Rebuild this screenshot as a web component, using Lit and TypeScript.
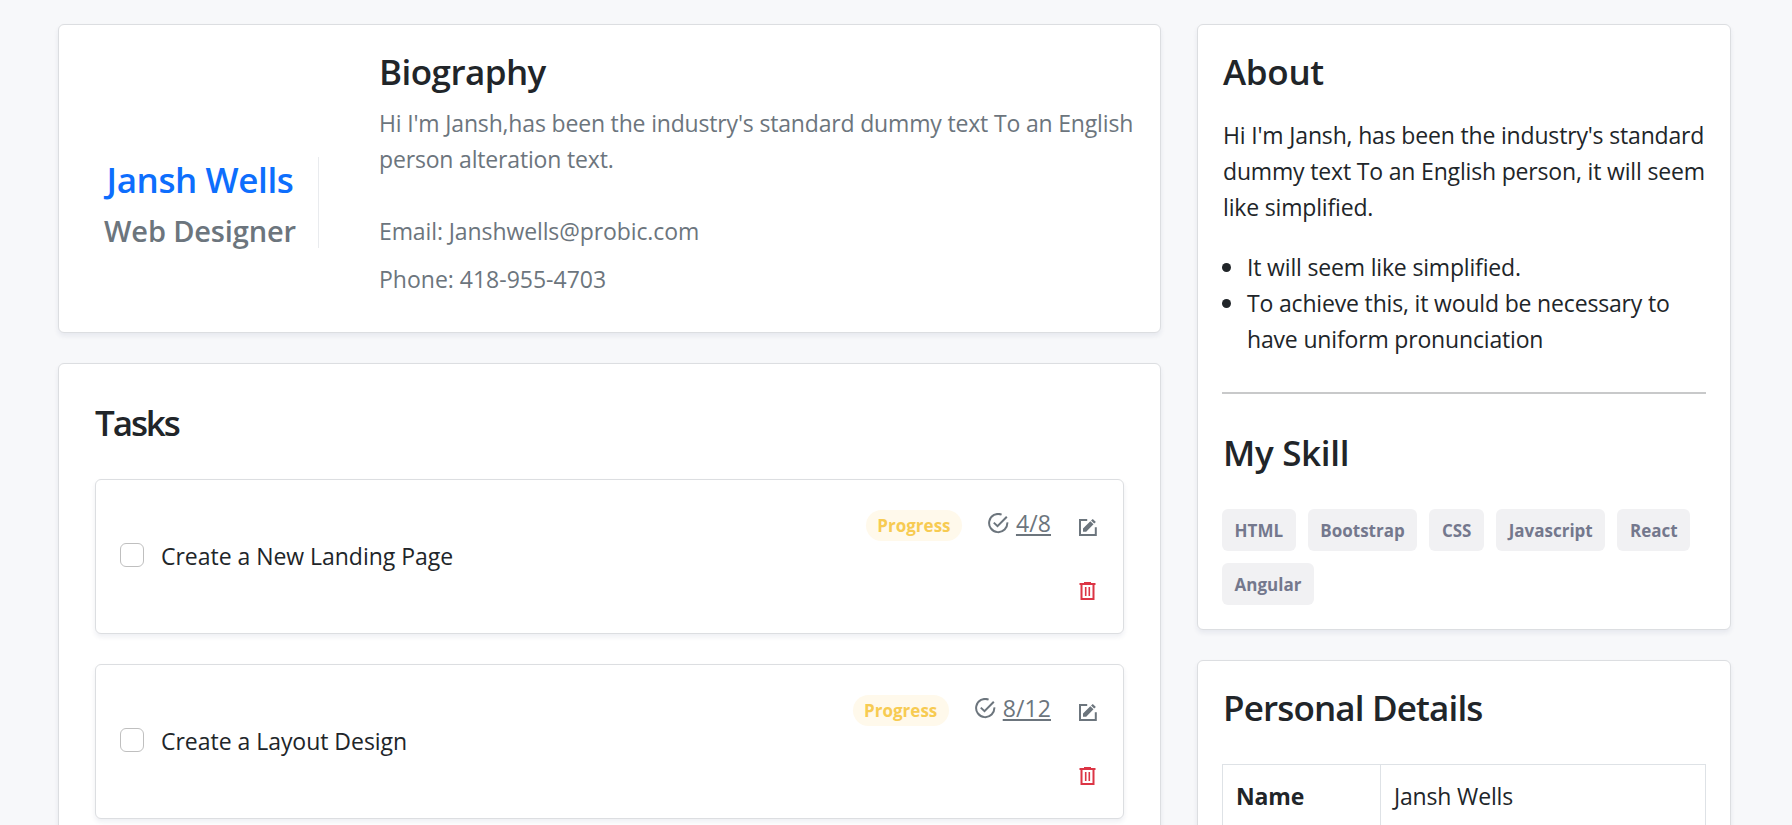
import { LitElement, html, css, svg } from "lit";
import { customElement, property } from "lit/decorators.js";

const checkIcon = html`<svg class="check" width="21" height="21" viewBox="0 0 21 21" fill="none" stroke="currentColor" stroke-width="2">
  ${svg`<path d="M13.6 1.6A9.1 9.1 0 1 0 19.3 9.4"/><path d="M5.8 9.6L9.5 13.2L18.8 3.7"/>`}
</svg>`;

const editIcon = html`<svg width="19" height="19" viewBox="0 0 19 19">
  ${svg`<path d="M9.2 2H2V17H17.8V9.2" fill="none" stroke="currentColor" stroke-width="2"/>
  <path d="M5 13.7V10.4L12.3 3.2L15.5 6.3L8.2 13.7ZM13 2.5L14.8 1L17.9 3.9L16.2 5.6Z" fill="currentColor"/>`}
</svg>`;

const trashIcon = html`<svg width="17" height="18" viewBox="0 0 17 18">
  ${svg`<path d="M5 0H12V1H16.5V3H0.5V1H5Z" fill="currentColor"/>
  <path d="M2.5 2V17H14.5V2" fill="none" stroke="currentColor" stroke-width="2"/>
  <path d="M6.7 5V14M10.3 5V14" stroke="currentColor" stroke-width="1.6"/>`}
</svg>`;

@customElement("task-item")
export class TaskItem extends LitElement {
  @property() label = "";
  @property() count = "";

  static styles = css`
    :host { display: block; }
    .task {
      box-sizing: border-box;
      height: 155px;
      display: flex;
      padding: 0 26px 0 24px;
      background: #fff;
      border: 1px solid #dcdee1;
      border-radius: 6px;
      box-shadow: 0 3px 5px rgba(30, 40, 90, 0.075);
    }
    .main { flex: 1; display: flex; align-items: flex-start; padding-top: 58px; }
    .box {
      box-sizing: border-box;
      width: 24px;
      height: 24px;
      margin: 5px 0 0;
      appearance: none;
      background: #fff;
      border: 1px solid #bfbfbf;
      border-radius: 6px;
    }
    .label { margin-left: 17px; letter-spacing: -0.03px; }
    .side { display: flex; flex-direction: column; align-items: flex-end; }
    .status { display: flex; color: #6c757d; margin-top: 25px; }
    .badge {
      box-sizing: border-box;
      width: 96px;
      height: 31px;
      margin-top: 5px;
      border-radius: 16px;
      background: #fff9eb;
      color: #f7cb52;
      font-size: 17px;
      font-weight: 700;
      line-height: 32px;
      letter-spacing: 0;
      text-align: center;
    }
    .check { margin: 8px 7px 0 26px; }
    .count { letter-spacing: 0.1px; text-decoration: underline; text-decoration-thickness: 2px; text-underline-offset: 2px; }
    .edit { width: 19px; margin: 13px 0 0 27px; line-height: 0; }
    .trash { color: #dc3545; margin: 41px 1px 0 0; line-height: 0; }
  `;

  render() {
    return html`
      <div class="task">
        <div class="main">
          <input class="box" type="checkbox" />
          <span class="label">${this.label}</span>
        </div>
        <div class="side">
          <div class="status">
            <span class="badge">Progress</span>
            ${checkIcon}
            <span class="count">${this.count}</span>
            <span class="edit">${editIcon}</span>
          </div>
          <div class="trash">${trashIcon}</div>
        </div>
      </div>
    `;
  }
}

@customElement("app-root")
export class AppRoot extends LitElement {
  private tasks = [
    { label: "Create a New Landing Page", count: "4/8" },
    { label: "Create a Layout Design", count: "8/12" },
  ];

  private skills = ["HTML", "Bootstrap", "CSS", "Javascript", "React", "Angular"];

  static styles = css`
    :host {
      display: block;
      height: 825px;
      overflow: hidden;
      background: #f7f8fa;
      color: #212529;
      font: 400 23px/36px "Open Sans", "Noto Sans", sans-serif;
      letter-spacing: -0.17px;
    }
    h2, h3, p, ul { margin: 0; }
    .page {
      display: grid;
      grid-template-columns: 1103px 534px;
      column-gap: 36px;
      align-items: start;
      padding: 24px 0 0 58px;
    }
    .col { display: flex; flex-direction: column; gap: 30px; }
    .card {
      box-sizing: border-box;
      background: #fff;
      border: 1px solid #dcdee1;
      border-radius: 6px;
      box-shadow: 0 3px 5px rgba(30, 40, 90, 0.075);
    }
    .title { font-size: 35px; font-weight: 600; line-height: 43px; letter-spacing: -0.55px; }
    .profile { height: 309px; display: flex; padding: 25px 0 0 23px; }
    .identity {
      box-sizing: border-box;
      width: 237px;
      height: 91px;
      margin-top: 107px;
      border-right: 1px solid #e9ebee;
      text-align: center;
    }
    .name { color: #0d6efd; line-height: 45px; letter-spacing: -0.4px; }
    .role { margin-top: 11px; color: #6c757d; font-size: 29px; font-weight: 600; line-height: 36px; letter-spacing: -0.15px; }
    .bio { margin-left: 60px; width: 765px; color: #6c757d; }
    .bio .title { color: #212529; margin-bottom: 12px; }
    .mail { margin-top: 36px; letter-spacing: -0.1px; }
    .phone { margin-top: 12px; letter-spacing: 0; }
    .tasks { height: 520px; padding: 37px 36px 0; }
    .tasks .title { letter-spacing: -2.1px; margin-bottom: 35px; }
    .list { display: flex; flex-direction: column; gap: 30px; }
    .about { height: 606px; padding: 25px 24px 0; }
    .about .title { padding-left: 1px; letter-spacing: -0.3px; }
    .intro { margin: 24px 0 0 1px; white-space: nowrap; }
    .points { margin-top: 24px; padding: 0; list-style: none; }
    .point { display: flex; gap: 16px; }
    .dot { flex: none; width: 9px; height: 9px; margin-top: 14px; border-radius: 50%; background: #212529; }
    .rule { height: 2px; margin: 35px 0 37px; background: #c8c9ca; }
    .tags { display: flex; flex-wrap: wrap; gap: 12px; margin-top: 35px; }
    .tag {
      height: 42px;
      padding: 0 12.6px;
      border-radius: 6px;
      background: #f1f1f3;
      color: #74788d;
      font-size: 17px;
      font-weight: 700;
      line-height: 43px;
      letter-spacing: 0;
    }
    .details { height: 300px; padding: 25px 24px 0; }
    .personal { padding-left: 1px; letter-spacing: -0.85px; }
    .table { display: grid; grid-template-columns: 158px 1fr; margin-top: 35px; height: 200px; border: 1px solid #dee2e6; }
    .cell { padding: 13px 12px 13px 13px; }
    .key { font-weight: 700; border-right: 1px solid #dee2e6; }
  `;

  render() {
    return html`
      <div class="page">
        <div class="col">
          <section class="card profile">
            <div class="identity">
              <h2 class="title name">Jansh Wells</h2>
              <h3 class="role">Web Designer</h3>
            </div>
            <div class="bio">
              <h2 class="title">Biography</h2>
              <p>Hi I'm Jansh,has been the industry's standard dummy text To an English<br />person alteration text.</p>
              <p class="mail">Email: Janshwells@probic.com</p>
              <p class="phone">Phone: 418-955-4703</p>
            </div>
          </section>
          <section class="card tasks">
            <h2 class="title">Tasks</h2>
            <div class="list">
              ${this.tasks.map((t) => html`<task-item label=${t.label} count=${t.count}></task-item>`)}
            </div>
          </section>
        </div>
        <div class="col">
          <section class="card about">
            <h2 class="title">About</h2>
            <p class="intro">Hi I'm Jansh, has been the industry's standard<br />dummy text To an English person, it will seem<br />like simplified.</p>
            <ul class="points">
              <li class="point"><span class="dot"></span><span>It will seem like simplified.</span></li>
              <li class="point"><span class="dot"></span><span>To achieve this, it would be necessary to<br />have uniform pronunciation</span></li>
            </ul>
            <div class="rule"></div>
            <h2 class="title">My Skill</h2>
            <div class="tags">${this.skills.map((s) => html`<span class="tag">${s}</span>`)}</div>
          </section>
          <section class="card details">
            <h2 class="title personal">Personal Details</h2>
            <div class="table">
              <div class="cell key">Name</div>
              <div class="cell">Jansh Wells</div>
            </div>
          </section>
        </div>
      </div>
    `;
  }
}
